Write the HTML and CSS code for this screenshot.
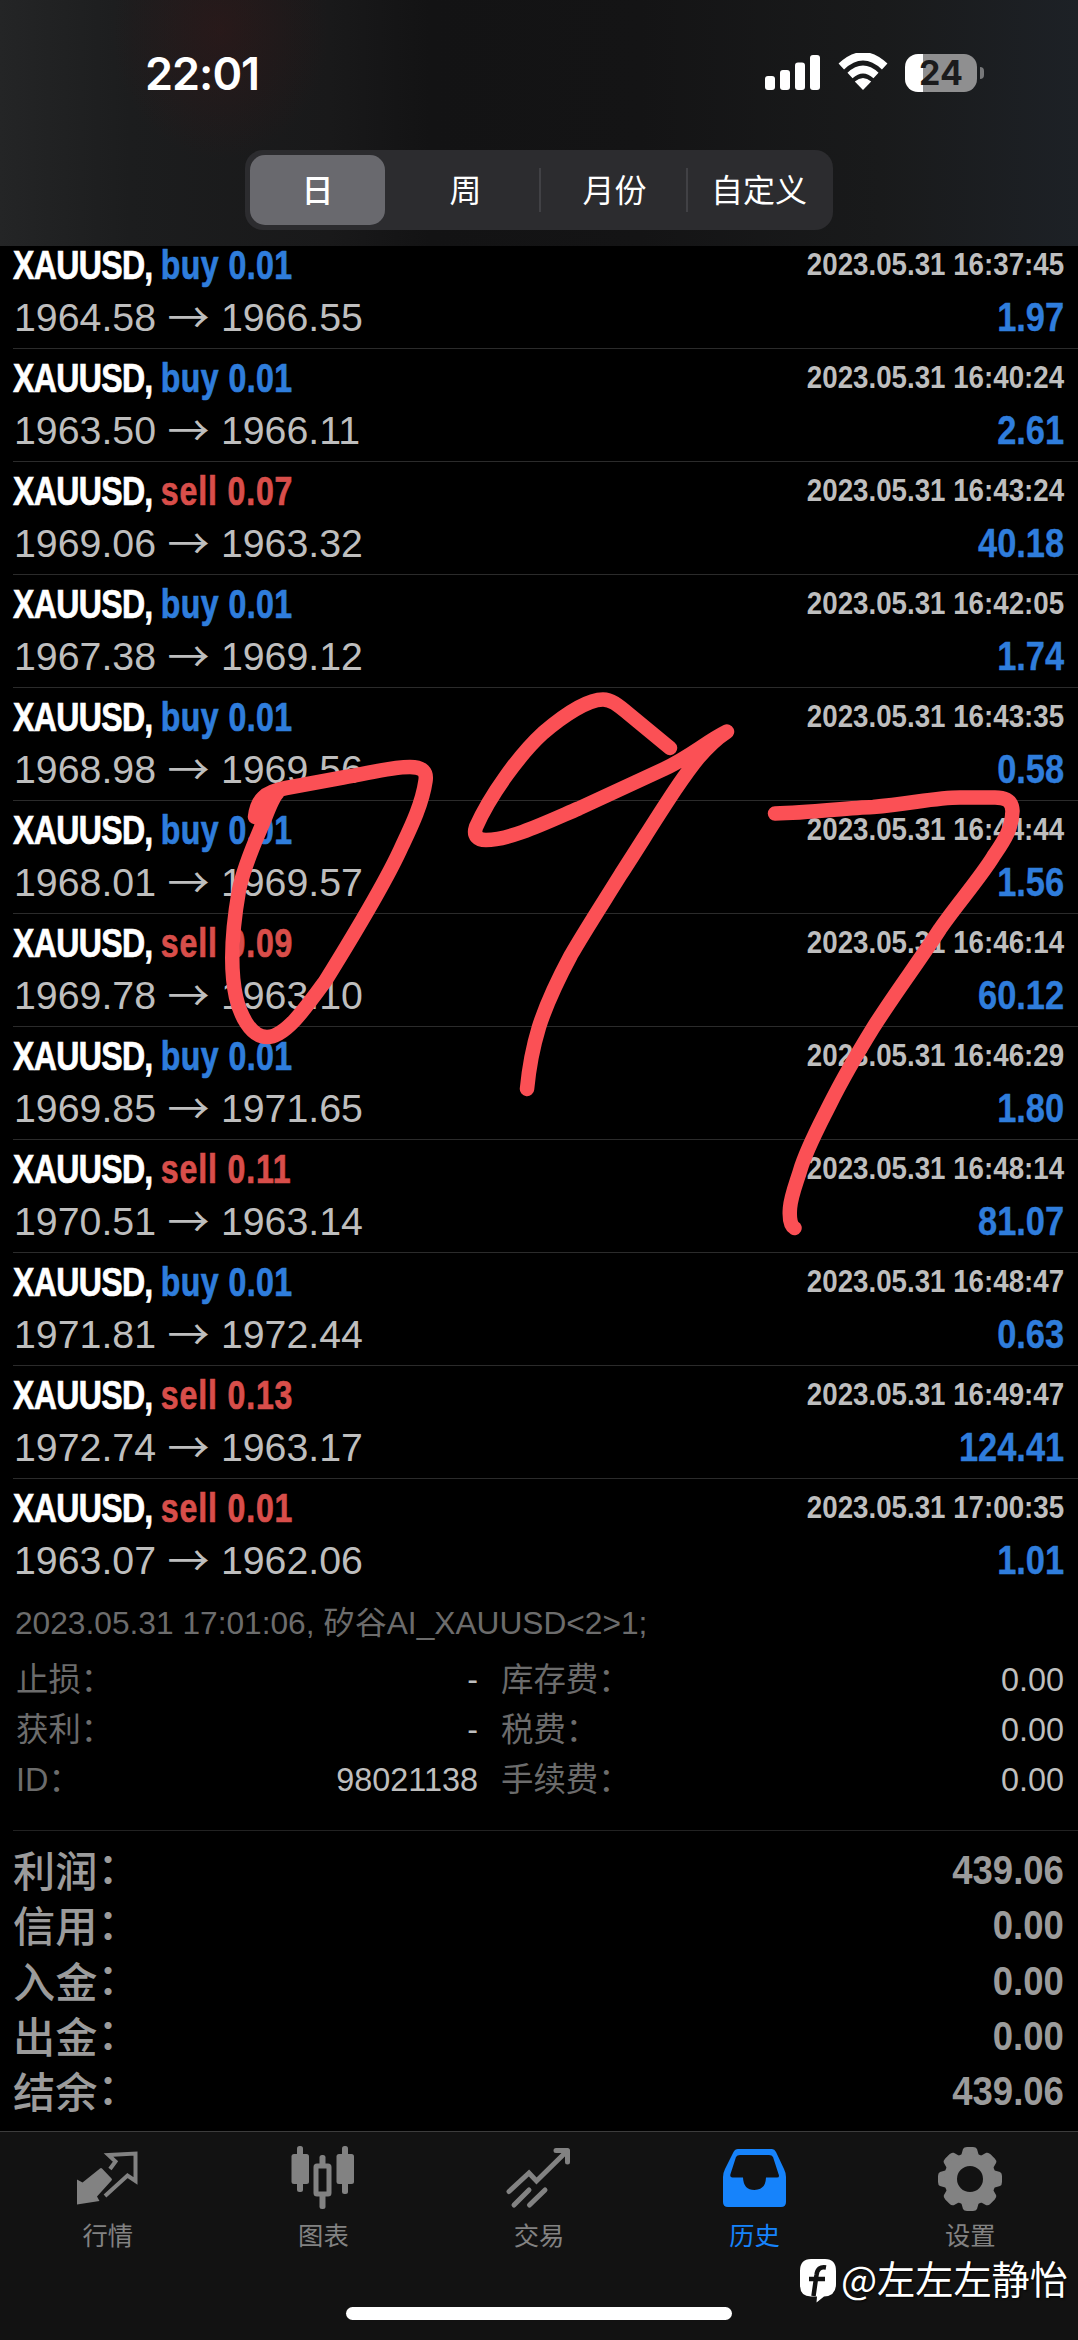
FILE: index.html
```html
<!DOCTYPE html>
<html lang="zh-CN">
<head>
<meta charset="utf-8">
<title>历史</title>
<link rel="stylesheet" href="styles.css">
</head>
<body>
<div class="screen">
  <header class="header">
    <div class="status">
      <span class="clock">22:01</span>
      <span class="status-icons">
        <svg class="signal" width="56" height="36" viewBox="0 0 56 36" fill="#fff"><rect x="0" y="21" width="10" height="14" rx="3"/><rect x="15" y="15" width="10" height="20" rx="3"/><rect x="30" y="7.500" width="10" height="27.500" rx="3"/><rect x="45" y="0" width="10" height="35" rx="3"/></svg>
        <svg class="wifi" width="50" height="38" viewBox="0 0 50 38" fill="none" stroke="#fff"><path d="M3.300 13.500Q25-7 46.700 13.500" stroke-width="8"/><path d="M12 22.500Q25 10.500 38 22.500" stroke-width="7.500"/><path d="M16.800 28.500Q25 21.500 33.200 28.500L25 37Z" fill="#fff" stroke="none"/></svg>
        <span class="battery"><span class="battery-level">24</span></span><span class="battery-tip"></span>
      </span>
    </div>
    <nav class="segments">
      <span class="segment active">日</span><span class="segment">周</span><span class="segment ruled">月份</span><span class="segment ruled">自定义</span>
    </nav>
  </header>

  <main class="history">
    <div class="deals">
      <div class="deal"><div class="left"><p class="title">XAUUSD, <b class="buy">buy 0.01</b></p><p class="price">1964.58 <i>→</i> 1966.55</p></div><div class="right"><p class="date">2023.05.31 16:37:45</p><p class="profit">1.97</p></div></div>
      <div class="deal"><div class="left"><p class="title">XAUUSD, <b class="buy">buy 0.01</b></p><p class="price">1963.50 <i>→</i> 1966.11</p></div><div class="right"><p class="date">2023.05.31 16:40:24</p><p class="profit">2.61</p></div></div>
      <div class="deal"><div class="left"><p class="title">XAUUSD, <b class="sell">sell 0.07</b></p><p class="price">1969.06 <i>→</i> 1963.32</p></div><div class="right"><p class="date">2023.05.31 16:43:24</p><p class="profit">40.18</p></div></div>
      <div class="deal"><div class="left"><p class="title">XAUUSD, <b class="buy">buy 0.01</b></p><p class="price">1967.38 <i>→</i> 1969.12</p></div><div class="right"><p class="date">2023.05.31 16:42:05</p><p class="profit">1.74</p></div></div>
      <div class="deal"><div class="left"><p class="title">XAUUSD, <b class="buy">buy 0.01</b></p><p class="price">1968.98 <i>→</i> 1969.56</p></div><div class="right"><p class="date">2023.05.31 16:43:35</p><p class="profit">0.58</p></div></div>
      <div class="deal"><div class="left"><p class="title">XAUUSD, <b class="buy">buy 0.01</b></p><p class="price">1968.01 <i>→</i> 1969.57</p></div><div class="right"><p class="date">2023.05.31 16:44:44</p><p class="profit">1.56</p></div></div>
      <div class="deal"><div class="left"><p class="title">XAUUSD, <b class="sell">sell 0.09</b></p><p class="price">1969.78 <i>→</i> 1963.10</p></div><div class="right"><p class="date">2023.05.31 16:46:14</p><p class="profit">60.12</p></div></div>
      <div class="deal"><div class="left"><p class="title">XAUUSD, <b class="buy">buy 0.01</b></p><p class="price">1969.85 <i>→</i> 1971.65</p></div><div class="right"><p class="date">2023.05.31 16:46:29</p><p class="profit">1.80</p></div></div>
      <div class="deal"><div class="left"><p class="title">XAUUSD, <b class="sell">sell 0.11</b></p><p class="price">1970.51 <i>→</i> 1963.14</p></div><div class="right"><p class="date">2023.05.31 16:48:14</p><p class="profit">81.07</p></div></div>
      <div class="deal"><div class="left"><p class="title">XAUUSD, <b class="buy">buy 0.01</b></p><p class="price">1971.81 <i>→</i> 1972.44</p></div><div class="right"><p class="date">2023.05.31 16:48:47</p><p class="profit">0.63</p></div></div>
      <div class="deal"><div class="left"><p class="title">XAUUSD, <b class="sell">sell 0.13</b></p><p class="price">1972.74 <i>→</i> 1963.17</p></div><div class="right"><p class="date">2023.05.31 16:49:47</p><p class="profit">124.41</p></div></div>
      <div class="deal"><div class="left"><p class="title">XAUUSD, <b class="sell">sell 0.01</b></p><p class="price">1963.07 <i>→</i> 1962.06</p></div><div class="right"><p class="date">2023.05.31 17:00:35</p><p class="profit">1.01</p></div></div>
    </div>

    <section class="details">
      <p class="comment">2023.05.31 17:01:06, 矽谷AI_XAUUSD&lt;2&gt;1;</p>
      <div class="facts">
        <span>止损：</span><em>-</em><span>库存费：</span><em>0.00</em>
        <span>获利：</span><em>-</em><span>税费：</span><em>0.00</em>
        <span>ID：</span><em>98021138</em><span>手续费：</span><em>0.00</em>
      </div>
    </section>

    <section class="totals">
      <div class="total"><span>利润<i>：</i></span><b>439.06</b></div>
      <div class="total"><span>信用<i>：</i></span><b>0.00</b></div>
      <div class="total"><span>入金<i>：</i></span><b>0.00</b></div>
      <div class="total"><span>出金<i>：</i></span><b>0.00</b></div>
      <div class="total"><span>结余<i>：</i></span><b>439.06</b></div>
    </section>
  </main>

  <footer class="footer">
    <nav class="tabs">
      <div class="tab">
        <svg width="70" height="70" viewBox="0 0 70 70"><path d="M27 24.500Q28 23.500 29 24.500L38.500 34.500Q39.500 35.500 38.500 36.500L24 52.500L26.500 57L4 60.500V35.500L9.500 38.500Z" fill="currentColor"/><path d="M37 25L42.500 17.500L35.500 11L62.500 9.500V37L54.500 31.500L32 52" fill="none" stroke="currentColor" stroke-width="4"/></svg>
        <span>行情</span>
      </div>
      <div class="tab">
        <svg width="70" height="70" viewBox="0 0 70 70" fill="currentColor"><rect x="9" y="2" width="6" height="46" rx="2.500"/><rect x="3.500" y="10" width="17.500" height="30" rx="2.500"/><rect x="54" y="2" width="6" height="48" rx="2.500"/><rect x="48.500" y="10" width="17.500" height="30" rx="2.500"/><rect x="31.500" y="11" width="6" height="12" rx="2.500"/><rect x="31.500" y="50" width="6" height="15" rx="2.500"/><rect x="28" y="22" width="13" height="28" rx="1" fill="none" stroke="currentColor" stroke-width="5"/></svg>
        <span>图表</span>
      </div>
      <div class="tab">
        <svg width="70" height="70" viewBox="0 0 70 70" fill="none" stroke="currentColor" stroke-width="5" stroke-linecap="round"><path d="M5 47.500L25 29L32.500 37L63 7"/><path d="M52 6.500H63.500V18" stroke-linejoin="round"/><path d="M10 61L25 46M25.500 61L41 46"/></svg>
        <span>交易</span>
      </div>
      <div class="tab current">
        <svg width="70" height="70" viewBox="0 0 70 70"><path fill="currentColor" fill-rule="evenodd" d="M18 5H52Q54.500 5 56 8L64 25Q66 29 66 33V58Q66 63 61 63H8Q3 63 3 58V33Q3 29 5 25L13.500 8Q15 5 18 5ZM20 11Q17 11 16 13L10.500 30Q9.500 33.500 12.500 33.500H23Q23.500 46 34.500 46Q45.500 46 46 33.500H57Q60 33.500 58.500 30L53 13Q52 11 49 11Z"/></svg>
        <span>历史</span>
      </div>
      <div class="tab">
        <svg width="70" height="70" viewBox="-35 -35 70 70"><g fill="currentColor"><path d="M-7-30Q-6-32-3-32H3Q6-32 7-30L9-23H-9ZM-7 30Q-6 32-3 32H3Q6 32 7 30L9 23H-9ZM30-7Q32-6 32-3V3Q32 6 30 7L23 9V-9ZM-30-7Q-32-6-32-3V3Q-32 6-30 7L-23 9V-9Z"/><path transform="rotate(45)" d="M-7-30Q-6-32-3-32H3Q6-32 7-30L9-23H-9ZM-7 30Q-6 32-3 32H3Q6 32 7 30L9 23H-9ZM30-7Q32-6 32-3V3Q32 6 30 7L23 9V-9ZM-30-7Q-32-6-32-3V3Q-32 6-30 7L-23 9V-9Z"/></g><circle r="19.500" fill="none" stroke="currentColor" stroke-width="13"/></svg>
        <span>设置</span>
      </div>
    </nav>
    <div class="home-bar"></div>
  </footer>

  <svg class="scribble" viewBox="0 0 1078 2340">
    <path d="M255 817C257 800 264 792 286 788L343 777.500C370 773 390 767 410 767C423 767 427 772 425.500 781C422 805 410 829 402 846C390 873 360 925 325 981.500C305 1009 285 1037 267 1037C250 1037 240 1014 236 997C230 970 232 930 239 890C245 862 257 838 265 818C270 805 273 797 278 792L268 797L262 818"/>
    <path d="M670 748L630 715C617 704 611 699.500 603 699.500C588 699.500 564 715 543 733C520 754 490 795 476 827C473 836 478 840 486 840C510 840 545 823 578.600 808.500L664 769C690 757 706 742 727 731.600C705 746 690 768 675 790C655 820 638 848 621 874C603 903 586 929 571 955C556 983 546 1005 539 1027C532 1050 529 1068 527 1089"/>
    <path d="M775 813.500C810 813 845 808 873 807C910 804 935 797.500 960 797.500H995C1006 797.500 1012 801 1012.500 811C1012 830 1003 842 993 857C980 878 955 907 940 929C918 963 895 993 873 1028C857 1054 842 1080 830 1104C818 1128 806 1150 800 1171C796 1184 791 1196 790 1208C789 1220 791 1226 794.500 1228"/>
  </svg>

  <div class="watermark">
    <svg width="38" height="46" viewBox="0 0 38 46"><path d="M12 1H26Q37 1 37 13V26Q37 38 25 38.500L17.500 44.500L18 38.500H12Q1 38.500 1 27V13Q1 1 12 1Z" fill="#fff"/><path d="M27 9.500Q18.500 8 17.500 17L14.500 38M10 21H26" fill="none" stroke="#121212" stroke-width="4.500"/></svg>
    <span>@左左左静怡</span>
  </div>
</div>
</body>
</html>
```
FILE: styles.css
```css
* { box-sizing: border-box; }
body { margin: 0; background: #000; }
p { margin: 0; }
em, i { font-style: normal; }

.screen {
  position: relative;
  width: 1078px;
  height: 2340px;
  overflow: hidden;
  background: #000;
  font-family: "Liberation Sans", "Noto Sans CJK SC", sans-serif;
  white-space: nowrap;
}

/* header */
.header {
  position: relative;
  z-index: 1;
  height: 246px;
  padding-top: 47px;
  background:
    radial-gradient(ellipse 110px 130px at 220px 30px, rgba(70, 20, 20, .3), transparent),
    linear-gradient(90deg, #242526 0, #1c1d1e 130px, #19191a 330px, #131314 430px, #141415 640px, #191a1b 880px, #1d2126 1078px);
}
.status {
  display: flex;
  justify-content: space-between;
  height: 50px;
  padding: 0 94px 0 145px;
}
.clock {
  font: 600 45px/53px Inter, sans-serif;
  color: #fff;
  letter-spacing: -1px;
}
.status-icons { display: flex; align-items: flex-start; }
.signal { margin-top: 8px; }
.wifi { margin: 6px 0 0 17px; }
.battery {
  width: 72px;
  height: 38px;
  margin: 7px 0 0 17px;
  border-radius: 13px;
  background: linear-gradient(90deg, #fff 18px, #8f8f90 18px);
  text-align: center;
}
.battery-level {
  font: 700 34px/38px Inter, sans-serif;
  color: #1b1b1c;
}
.battery-tip {
  width: 4px;
  height: 12px;
  margin: 20px 0 0 3px;
  border-radius: 0 6px 6px 0;
  background: #77787a;
}
.segments {
  display: grid;
  grid-template-columns: 142px 147px 147px 142px;
  align-items: center;
  width: 588px;
  height: 80px;
  margin: 53px 0 0 245px;
  padding: 5px;
  border-radius: 18px;
  background: #2c2c2f;
}
.segment {
  height: 44px;
  font: 400 32px/41px "Noto Sans CJK SC", sans-serif;
  color: #fff;
  text-align: center;
}
.segment.active {
  width: 135px;
  height: 70px;
  line-height: 67px;
  border-radius: 15px;
  background: #69696e;
  font-weight: 500;
}
.ruled { padding-left: 2px; border-left: 2px solid #414145; }

/* deals */
.deals { margin: -10px 0 0 13px; }
.deal {
  display: flex;
  justify-content: space-between;
  height: 113px;
  padding-right: 14px;
  border-bottom: 1px solid #2b2b2b;
}
.deal:last-child { border-bottom: 0; }
.right { text-align: right; }
.title {
  font-size: 40px;
  font-weight: 700;
  line-height: 58px;
  letter-spacing: -.85px;
  color: #fff;
  transform: scaleX(.802);
  transform-origin: left;
  -webkit-text-stroke: .7px;
}
.buy { color: #2f7ddc; letter-spacing: .5px; }
.sell { color: #d84e4a; letter-spacing: 1.05px; }
.price {
  padding-left: 1px;
  font-size: 39.3px;
  line-height: 46px;
  color: #bebebe;
}
.price i {
  position: relative;
  top: 2px;
  display: inline-block;
  width: 43px;
  font-family: "Noto Sans CJK SC", sans-serif;
  font-size: 42px;
  font-weight: 400;
  line-height: 38px;
  text-align: center;
}
.date {
  font-size: 32px;
  font-weight: 700;
  line-height: 57px;
  color: #bebebe;
  transform: scaleX(.866);
  transform-origin: right;
}
.profit {
  font-size: 40px;
  font-weight: 700;
  line-height: 49px;
  color: #2f7ddc;
  transform: scaleX(.86);
  transform-origin: right;
  -webkit-text-stroke: .4px;
}

/* selected deal details */
.details {
  margin-left: 13px;
  padding-bottom: 25px;
  border-bottom: 1px solid #222;
}
.comment {
  padding-left: 2px;
  font-size: 31.7px;
  line-height: 63px;
  color: #6c6c6c;
}
.facts {
  display: grid;
  grid-template-columns: 145px 317px 1fr auto;
  padding: 0 14px 0 3px;
  font-size: 32.4px;
  line-height: 50px;
  color: #6c6c6c;
}
.facts span:nth-of-type(even) { padding-left: 23px; }
.facts em { color: #bebebe; text-align: right; }

/* totals */
.totals { height: 300px; padding: 12px 14px 0 13px; }
.total {
  display: flex;
  justify-content: space-between;
  height: 55.3px;
  color: #9b9b9b;
}
.total span {
  font-family: "Noto Sans CJK SC", sans-serif;
  font-size: 42.2px;
  font-weight: 500;
  line-height: 51px;
}
.total i { position: relative; top: -.09em; }
.total b {
  font-size: 41.5px;
  line-height: 54px;
  transform: scaleX(.88);
  transform-origin: right;
}

/* tab bar */
.footer {
  height: 209px;
  border-top: 1px solid #3c3c3c;
  background: #121212;
}
.tabs {
  display: grid;
  grid-template-columns: repeat(5, 1fr);
  height: 175px;
  padding-top: 12px;
}
.tab {
  display: flex;
  flex-direction: column;
  align-items: center;
  color: #828282;
}
.tab span {
  margin-top: 2px;
  font: 400 25.3px/36px "Noto Sans CJK SC", sans-serif;
}
.current { color: #1683fb; }
.home-bar {
  width: 386px;
  height: 13px;
  margin: 0 auto;
  border-radius: 7px;
  background: #fff;
}

/* overlays */
.scribble {
  position: absolute;
  inset: 0;
  z-index: 2;
  width: 1078px;
  height: 2340px;
  fill: none;
  stroke: #fb5055;
  stroke-width: 14.5;
  stroke-linecap: round;
  stroke-linejoin: round;
}
.watermark {
  position: absolute;
  right: 10px;
  bottom: 36px;
  display: flex;
  align-items: center;
  gap: 4px;
  font: 400 38.2px/40px "Noto Sans CJK SC", sans-serif;
  color: #fff;
}
.watermark svg { margin-top: 6px; }
.watermark span { text-shadow: 1px 1px 2px #000; }
```
